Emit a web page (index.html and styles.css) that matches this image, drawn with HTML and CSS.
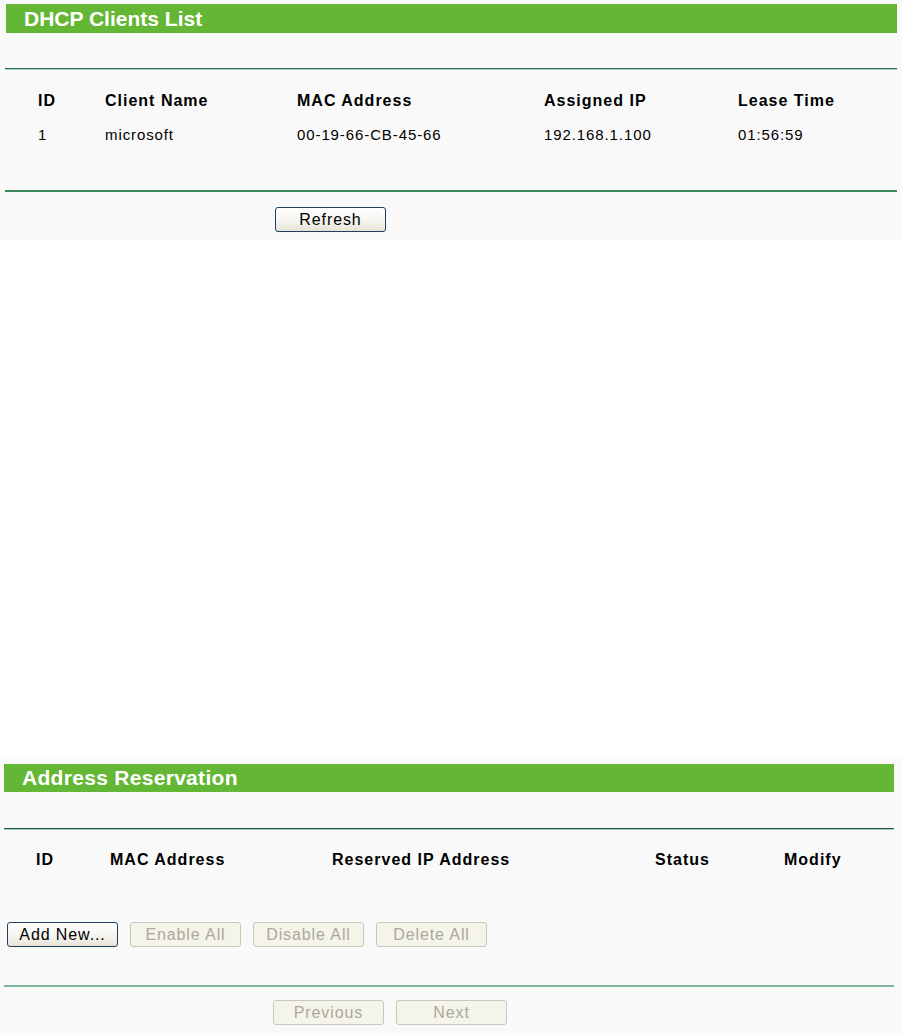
FILE: index.html
```html
<!DOCTYPE html>
<html>
<head>
<meta charset="utf-8">
<title>DHCP Clients</title>
<link rel="stylesheet" href="styles.css">
</head>
<body>
<section class="panel panel-clients">
  <h1 class="bar">DHCP Clients List</h1>
  <hr class="rule rule-dark">
  <div class="grid grid-clients head">
    <span>ID</span><span>Client Name</span><span>MAC Address</span><span>Assigned IP</span><span>Lease Time</span>
  </div>
  <div class="grid grid-clients data">
    <span>1</span><span>microsoft</span><span>00-19-66-CB-45-66</span><span>192.168.1.100</span><span>01:56:59</span>
  </div>
  <hr class="rule rule-green rule-after-data">
  <div class="actions actions-refresh">
    <button class="btn">Refresh</button>
  </div>
</section>

<section class="panel panel-reserve">
  <h1 class="bar bar-wide">Address Reservation</h1>
  <hr class="rule rule-dark">
  <div class="grid grid-reserve head">
    <span>ID</span><span>MAC Address</span><span>Reserved IP Address</span><span>Status</span><span>Modify</span>
  </div>
  <div class="actions actions-manage">
    <button class="btn">Add New...</button>
    <button class="btn" disabled>Enable All</button>
    <button class="btn" disabled>Disable All</button>
    <button class="btn" disabled>Delete All</button>
  </div>
  <hr class="rule rule-light">
  <div class="actions actions-pager">
    <button class="btn" disabled>Previous</button>
    <button class="btn" disabled>Next</button>
  </div>
</section>
</body>
</html>
```

FILE: styles.css
```css
html, body {
  margin: 0;
  padding: 0;
  background: #ffffff;
}

body {
  font-family: "Liberation Sans", Arial, sans-serif;
  color: #000;
}

.panel {
  background: #f9f9f9;
  overflow: hidden;
}

.panel-clients {
  height: 240px;
  padding: 0 5px 0 5px;
  box-sizing: border-box;
}

.panel-reserve {
  margin-top: 517px;
  height: 278px;
  padding: 0 8px 0 4px;
  box-sizing: border-box;
}

.bar {
  margin: 4px 0 0 1px;
  height: 29px;
  background: #64b735;
  color: #fff;
  font-size: 21px;
  font-weight: bold;
  line-height: 30px;
  padding-left: 18px;
  letter-spacing: 0;
  box-sizing: border-box;
}

.panel-reserve .bar {
  margin: 7px 0 0 0;
  height: 28px;
  line-height: 27px;
}

.bar-wide {
  letter-spacing: 0.3px;
}

.rule {
  border: 0;
  height: 2px;
  margin: 35px 0 0 0;
  padding: 0;
}

.rule-dark {
  background: #2f7659;
  border-bottom: 1px solid #a9c9bb;
  height: 1px;
}

.panel-reserve .rule-dark {
  margin-top: 36px;
  background: #1e5a47;
}

.rule-green {
  background: #3a8a5d;
}

.rule-after-data {
  margin-top: 46px;
}

.rule-light {
  margin-top: 38px;
  background: #7db497;
}

.grid {
  display: grid;
  height: 20px;
  align-items: center;
}

.grid-clients {
  padding-left: 33px;
  grid-template-columns: 67px 192px 247px 194px 1fr;
}

.grid-reserve {
  padding-left: 32px;
  grid-template-columns: 74px 222px 323px 129px 1fr;
}

.head {
  margin-top: 21px;
  font-size: 16px;
  font-weight: bold;
  letter-spacing: 1px;
}

.panel-reserve .head {
  margin-top: 20px;
}

.data {
  margin-top: 13px;
  font-size: 15px;
  letter-spacing: 0.9px;
}

.actions {
  display: flex;
  gap: 12px;
}

.actions-refresh {
  margin-top: 15px;
  padding-left: 270px;
}

.actions-manage {
  margin-top: 52px;
  padding-left: 3px;
}

.actions-pager {
  margin-top: 13px;
  padding-left: 269px;
}

.btn {
  width: 111px;
  height: 25px;
  padding: 0;
  font-family: "Liberation Sans", Arial, sans-serif;
  font-size: 16px;
  letter-spacing: 0.9px;
  color: #000;
  background: linear-gradient(#ffffff, #f4f3ee 60%, #e6e3d6);
  border: 1px solid #1e3f5f;
  border-radius: 3px;
}

.btn:disabled {
  color: #aca899;
  background: #f5f4ea;
  border-color: #c9c7ba;
}
```
